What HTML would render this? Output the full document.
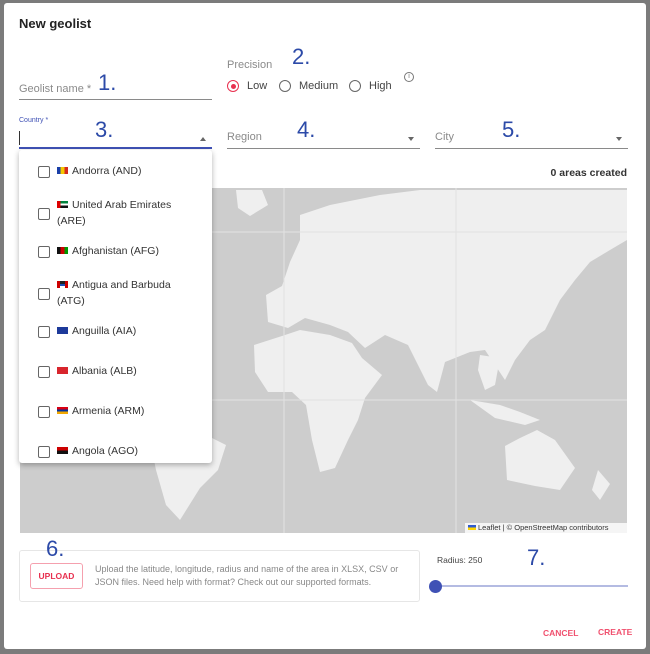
<!DOCTYPE html>
<html><head><meta charset="utf-8"><style>
*{box-sizing:border-box;margin:0;padding:0}
body{width:650px;height:654px;background:#7b7b7b;font-family:"Liberation Sans",sans-serif;position:relative;overflow:hidden}
.dlg{position:absolute;left:4px;top:3px;width:642px;height:646px;background:#fff;border-radius:3px}
.a{position:absolute}
.lbl{color:#8a8a8a;font-size:11px}
.num{color:#2c4aa8;font-size:22px}
.line{position:absolute;height:1px;background:#8a8a8a}
.radio{position:absolute;width:12px;height:12px;border:1.5px solid #666;border-radius:50%}
.cb{position:absolute;left:38px;width:12px;height:12px;border:1.5px solid #666;border-radius:2px}
.it{position:absolute;left:57px;font-size:10.5px;color:#333;line-height:16px;width:140px}
.fl{display:inline-block;width:11px;height:7px;margin-right:4px;vertical-align:0}
.caret{position:absolute;width:0;height:0;border-left:3.5px solid transparent;border-right:3.5px solid transparent}
</style></head><body>
<div class="dlg"></div>
<div class="a" style="left:19px;top:16px;font-size:13px;font-weight:bold;color:#222">New geolist</div>

<div class="a lbl" style="left:19px;top:83px">Geolist name *</div>
<div class="line" style="left:19px;top:99px;width:193px"></div>
<div class="a num" style="left:98px;top:70px">1.</div>

<div class="a lbl" style="left:227px;top:59px">Precision</div>
<div class="a num" style="left:292px;top:44px">2.</div>
<div class="radio" style="left:227px;top:80px;border-color:#e8304f"></div>
<div class="a" style="left:231px;top:84px;width:5px;height:5px;border-radius:50%;background:#e8304f"></div>
<div class="a" style="left:247px;top:80px;font-size:11px;color:#444">Low</div>
<div class="radio" style="left:279px;top:80px"></div>
<div class="a" style="left:299px;top:80px;font-size:11px;color:#444">Medium</div>
<div class="radio" style="left:349px;top:80px"></div>
<div class="a" style="left:369px;top:80px;font-size:11px;color:#444">High</div>
<div class="a" style="left:404px;top:72px;width:10px;height:10px;border:1px solid #777;border-radius:50%;font-size:7px;text-align:center;line-height:8px;color:#777">i</div>

<div class="a" style="left:19px;top:117px;font-size:7px;color:#3f51b5">Country *</div>
<div class="a" style="left:19px;top:131px;width:1px;height:14px;background:#333"></div>
<div class="a num" style="left:95px;top:117px">3.</div>
<div class="caret" style="left:200px;top:137px;border-bottom:4px solid #666"></div>
<div class="a" style="left:19px;top:147px;width:193px;height:2px;background:#3f51b5"></div>

<div class="a lbl" style="left:227px;top:131px">Region</div>
<div class="a num" style="left:297px;top:117px">4.</div>
<div class="caret" style="left:408px;top:137px;border-top:4px solid #666"></div>
<div class="line" style="left:227px;top:148px;width:193px"></div>

<div class="a lbl" style="left:435px;top:131px">City</div>
<div class="a num" style="left:502px;top:117px">5.</div>
<div class="caret" style="left:616px;top:137px;border-top:4px solid #666"></div>
<div class="line" style="left:435px;top:148px;width:193px"></div>

<div class="a" style="right:23px;top:167px;font-size:10.5px;font-weight:bold;color:#333">0 areas created</div>

<svg class="a" style="left:20px;top:188px" width="607" height="345" viewBox="20 188 607 345">
<rect x="20" y="188" width="607" height="345" fill="#cdcdcd"/>
<g fill="#efefef">
<polygon points="300,215 330,205 380,195 420,190 627,190 627,240 610,250 590,262 575,280 560,300 545,330 530,340 515,360 505,380 495,365 485,350 470,352 445,362 437,392 428,385 408,345 385,335 365,348 348,332 330,325 305,318 288,328 268,322 266,295 282,286 290,262 300,240"/>
<polygon points="480,355 500,358 495,385 485,390 478,370"/>
<polygon points="254,345 282,336 300,330 330,335 352,343 362,358 382,375 365,398 358,420 348,440 335,468 320,472 312,440 306,405 292,392 268,392 255,372"/>
<polygon points="505,446 520,438 537,430 555,440 575,468 560,490 535,486 507,480"/>
<polygon points="150,440 175,430 200,432 226,445 218,470 200,488 180,520 166,505 156,470"/>
<polygon points="236,190 262,190 268,205 250,216 238,208"/>
<polygon points="60,190 120,190 110,230 80,240 55,220"/>
<polygon points="470,400 500,405 520,412 540,420 525,425 495,418"/>
<polygon points="598,470 610,484 600,500 592,490"/>
</g>
<g stroke="#e2e2e2" stroke-width="1"><line x1="284" y1="188" x2="284" y2="533"/><line x1="456" y1="188" x2="456" y2="533"/><line x1="20" y1="400" x2="627" y2="400"/><line x1="20" y1="232" x2="627" y2="232"/></g>
</svg>
<div class="a" style="left:465px;top:523px;width:162px;height:10px;background:rgba(255,255,255,.8);font-size:7.5px;color:#333;line-height:10px;padding-left:3px"><span style="display:inline-block;width:8px;height:5px;background:linear-gradient(#2f5bd0 50%,#ffd500 50%);margin-right:2px"></span>Leaflet | © OpenStreetMap contributors</div>

<div class="a" style="left:19px;top:150px;width:193px;height:313px;background:#fff;border-radius:3px;box-shadow:0 2px 6px rgba(0,0,0,.3)"></div>
<div class="cb" style="top:166px"></div><div class="it" style="top:163px"><span class="fl" style="background:linear-gradient(90deg,#1a3fa8 33%,#f5c800 33% 66%,#d52b1e 66%)"></span>Andorra (AND)</div>
<div class="cb" style="top:208px"></div><div class="it" style="top:197px"><span class="fl" style="background:linear-gradient(90deg,#d00 30%,transparent 30%),linear-gradient(#00843d 33%,#fff 33% 66%,#111 66%)"></span>United Arab Emirates (ARE)</div>
<div class="cb" style="top:246px"></div><div class="it" style="top:243px"><span class="fl" style="background:linear-gradient(90deg,#111 33%,#c00 33% 66%,#090 66%)"></span>Afghanistan (AFG)</div>
<div class="cb" style="top:288px"></div><div class="it" style="top:277px"><span class="fl" style="background:linear-gradient(#222 40%,#1a4fb8 40% 70%,#fff 70%),#c00;border-left:3px solid #c00;border-right:3px solid #c00"></span>Antigua and Barbuda (ATG)</div>
<div class="cb" style="top:326px"></div><div class="it" style="top:323px"><span class="fl" style="background:#1d3a9a"></span>Anguilla (AIA)</div>
<div class="cb" style="top:366px"></div><div class="it" style="top:363px"><span class="fl" style="background:#d8252d"></span>Albania (ALB)</div>
<div class="cb" style="top:406px"></div><div class="it" style="top:403px"><span class="fl" style="background:linear-gradient(#d90012 33%,#0033a0 33% 66%,#f2a800 66%)"></span>Armenia (ARM)</div>
<div class="cb" style="top:446px"></div><div class="it" style="top:443px"><span class="fl" style="background:linear-gradient(#c00 50%,#111 50%)"></span>Angola (AGO)</div>

<div class="a" style="left:19px;top:550px;width:401px;height:52px;border:1px solid #e6e6e6;border-radius:3px"></div>
<div class="a num" style="left:46px;top:536px">6.</div>
<div class="a" style="left:30px;top:563px;width:53px;height:26px;border:1px solid #f5a0ae;border-radius:3px;color:#e8304f;font-size:8.5px;font-weight:bold;text-align:center;line-height:24px">UPLOAD</div>
<div class="a" style="left:95px;top:563px;width:308px;font-size:9px;color:#888;line-height:13px">Upload the latitude, longitude, radius and name of the area in XLSX, CSV or JSON files. Need help with format? Check out our supported formats.</div>

<div class="a" style="left:437px;top:555px;font-size:8.5px;color:#444">Radius: 250</div>
<div class="a num" style="left:527px;top:545px">7.</div>
<div class="a" style="left:436px;top:585px;width:192px;height:2px;background:#b4bbe2"></div>
<div class="a" style="left:429px;top:580px;width:13px;height:13px;border-radius:50%;background:#3f51b5"></div>

<div class="a" style="left:543px;top:628px;font-size:8.5px;font-weight:bold;color:#f0506e">CANCEL</div>
<div class="a" style="left:598px;top:627px;font-size:8.5px;font-weight:bold;color:#f0506e">CREATE</div>
</body></html>
